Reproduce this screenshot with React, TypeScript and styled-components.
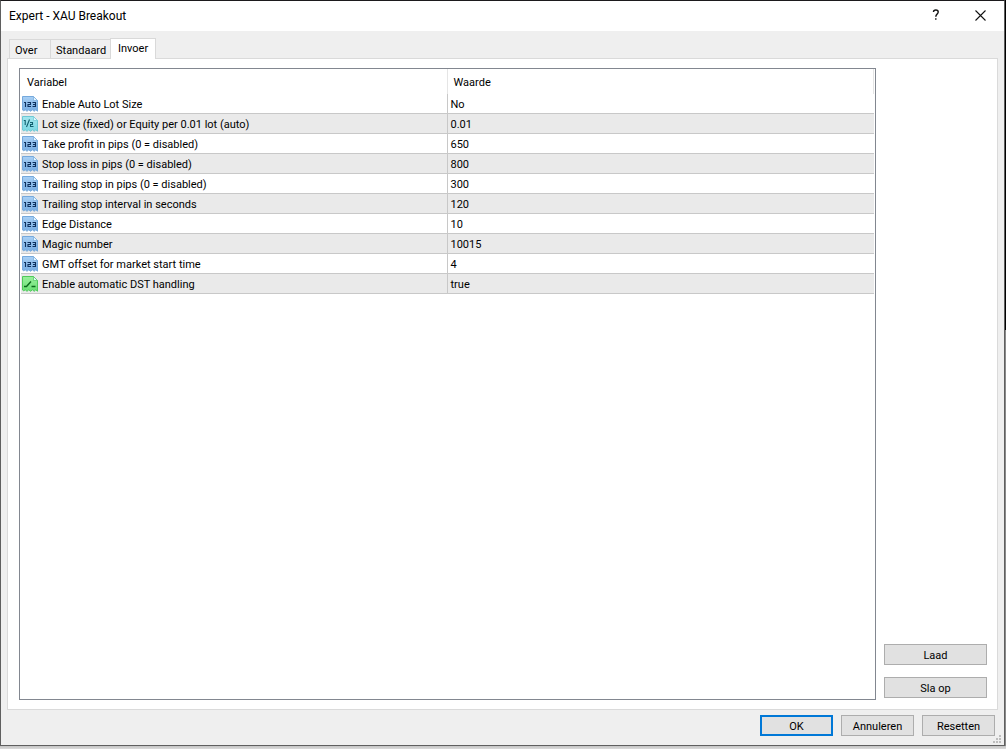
import React from 'react';
import styled, { createGlobalStyle } from 'styled-components';

const Global = createGlobalStyle`
  *, *::before, *::after { box-sizing: border-box; }
  body { margin: 0; background: linear-gradient(#000 0 330px, #8a8a8a 330px); }
  body, button { font-family: Roboto, "Liberation Sans", sans-serif; font-size: 11px; line-height: 16px; color: #000; }
`;

const Desktop = styled.div`
  min-height: 100vh;
  display: flex;
  flex-direction: column;
  padding: 0 1px 3px 0;
  background: linear-gradient(#c4c4c4, #dadada) bottom / 100% 3px no-repeat;
`;

const Dialog = styled.main`
  flex: 1;
  display: flex;
  flex-direction: column;
  background: #efefef;
  border: 1px solid #5f5f5f;
  border-top-color: #1c1a1d;
`;

const TitleBar = styled.header`
  display: flex;
  align-items: center;
  height: 30px;
  padding: 0 1px 0 8px;
  background: #fff;
`;

const Title = styled.h1`
  flex: 1;
  margin: 0;
  font-size: 12px;
  font-weight: 400;
`;

const CaptionButton = styled.button`
  display: flex;
  align-items: center;
  justify-content: center;
  width: 45px;
  height: 28px;
  padding: 0 0 2px;
  border: 0;
  background: transparent;
`;

const Body = styled.div`
  flex: 1;
  display: flex;
  flex-direction: column;
  padding: 7px 6px 0;
`;

const Tabs = styled.div`
  display: flex;
  align-items: flex-end;
  padding-left: 2px;
  margin-bottom: -1px;
  z-index: 1;
`;

const Tab = styled.button<{ $active?: boolean; $width: number }>`
  width: ${p => p.$width}px;
  height: ${p => (p.$active ? 21 : 19)}px;
  margin-bottom: ${p => (p.$active ? 0 : 1)}px;
  padding: ${p => (p.$active ? '0 0 1px 7px' : '3px 0 0 5px')};
  text-align: left;
  border: 1px solid #d9d9d9;
  border-bottom: 0;
  border-right-width: ${p => (p.$active ? 1 : 0)}px;
  background: ${p => (p.$active ? '#fff' : '#f0f0f0')};
`;

const Panel = styled.section`
  flex: 1;
  display: grid;
  grid-template-columns: 1fr 103px;
  gap: 8px;
  padding: 9px 10px 9px 11px;
  background: #fff;
  border: 1px solid #dadada;
`;

const ListFrame = styled.div`
  border: 1px solid #828790;
  padding: 0 1px;
`;

const Table = styled.table`
  width: 100%;
  table-layout: fixed;
  border-collapse: separate;
  border-spacing: 0;
`;

const HeadCell = styled.th`
  height: 25px;
  padding: 2px 6px 0;
  font-weight: 400;
  text-align: left;
  border-right: 1px solid #e5e5e5;

  &:first-child { width: calc(50% - 1px); }
`;

const Row = styled.tr`
  &:nth-child(even) { background: #eaeaea; }
`;

const Cell = styled.td<{ $value?: boolean }>`
  height: 20px;
  padding: ${p => (p.$value ? '2px 3px 0' : '0 3px 0 1px')};
  border-bottom: 1px solid #c8c8c8;
  border-right: ${p => (p.$value ? '0' : '1px solid #c8c8c8')};
  white-space: nowrap;
`;

const Variable = styled.div`
  display: flex;
  align-items: center;
  gap: 4px;
  height: 19px;
`;

const VariableName = styled.span`
  padding-top: 2px;
`;

const SideActions = styled.div`
  display: flex;
  flex-direction: column;
  justify-content: flex-end;
  gap: 12px;
  padding-bottom: 2px;
`;

const PushButton = styled.button<{ $primary?: boolean }>`
  height: 21px;
  min-width: 73px;
  padding: 2px 0 0;
  background: #e1e1e1;
  border: ${p => (p.$primary ? '2px solid #0078d7' : '1px solid #adadad')};
`;

const Footer = styled.footer`
  display: flex;
  align-items: flex-start;
  justify-content: flex-end;
  gap: 8px;
  height: 35px;
  padding: 5px 9px 0;
`;

const Grip = styled.svg`
  position: absolute;
  right: 3px;
  bottom: 2px;
`;

const Frame = styled.div`
  position: relative;
`;

type Kind = 'int' | 'real' | 'bool';

const palette: Record<Kind, { from: string; to: string; edge: string; ink: string }> = {
  int: { from: '#a9d0f5', to: '#74abe2', edge: '#75a9dc', ink: '#0c2f5c' },
  real: { from: '#a5e6ee', to: '#7ad8e3', edge: '#6cc8d5', ink: '#11606e' },
  bool: { from: '#9af09d', to: '#68e072', edge: '#4fc95b', ink: '#0b6a1c' },
};

function TypeIcon({ kind }: { kind: Kind }) {
  const c = palette[kind];
  return (
    <svg width="16" height="16" viewBox="0 0 16 16" aria-hidden="true">
      <defs>
        <linearGradient id={`fill-${kind}`} x1="0" y1="0" x2="0" y2="1">
          <stop offset="0" stopColor={c.from} />
          <stop offset="1" stopColor={c.to} />
        </linearGradient>
      </defs>
      <path
        d="M.5 .5H11.5L15.5 4.5V15.2L13.8 13.8L12.2 15.3L10.4 13.8L8.6 15.3L6.8 13.8L5 15.3L3.2 13.8L1.8 14.8L.5 14Z"
        fill={`url(#fill-${kind})`}
        stroke={c.edge}
      />
      <path d="M11.5 .5V4.5H15.5Z" fill="#e4f5fd" stroke={c.edge} strokeWidth=".7" />
      <g fill="none" stroke={c.ink} strokeWidth="1.1">
        {kind === 'int' && <path d="M2 6.5H3.5V11M5.5 6.5H8.5V8.5H6V10.5H9M10.5 6.5H13.5V10.5H10.5M11 8.5H13.5" />}
        {kind === 'real' && <path d="M1.8 4.5H3.2V9M7.5 3.5L4.5 11M8 6.5H10.5V8.5H8.5V10.5H11.5" />}
        {kind === 'bool' && <path d="M2 10.5H4.5L9 5.5M9.5 10.5H13.5" strokeWidth="1.4" />}
      </g>
    </svg>
  );
}

const inputs: { kind: Kind; name: string; value: string }[] = [
  { kind: 'int', name: 'Enable Auto Lot Size', value: 'No' },
  { kind: 'real', name: 'Lot size (fixed) or Equity per 0.01 lot (auto)', value: '0.01' },
  { kind: 'int', name: 'Take profit in pips (0 = disabled)', value: '650' },
  { kind: 'int', name: 'Stop loss in pips (0 = disabled)', value: '800' },
  { kind: 'int', name: 'Trailing stop in pips (0 = disabled)', value: '300' },
  { kind: 'int', name: 'Trailing stop interval in seconds', value: '120' },
  { kind: 'int', name: 'Edge Distance', value: '10' },
  { kind: 'int', name: 'Magic number', value: '10015' },
  { kind: 'int', name: 'GMT offset for market start time', value: '4' },
  { kind: 'bool', name: 'Enable automatic DST handling', value: 'true' },
];

const gripDots = [[6, 0], [3, 3], [6, 3], [0, 6], [3, 6], [6, 6]];

export default function App() {
  return (
    <Desktop>
      <Global />
      <Dialog>
        <TitleBar>
          <Title>Expert - XAU Breakout</Title>
          <CaptionButton aria-label="Help">
            <svg width="8" height="12" viewBox="0 0 8 12" fill="none" stroke="#111" strokeWidth="1.4">
              <path d="M1.5 3C1.5 .4 6.2 .4 6.2 3C6.2 5 3.8 5 3.8 7.8M3.8 9.3V10.8" />
            </svg>
          </CaptionButton>
          <CaptionButton aria-label="Close">
            <svg width="11" height="11" viewBox="0 0 11 11" fill="none" stroke="#111" strokeWidth="1.1">
              <path d="M.5 .5L10.5 10.5M10.5 .5L.5 10.5" />
            </svg>
          </CaptionButton>
        </TitleBar>
        <Body>
          <Tabs role="tablist">
            <Tab role="tab" $width={41}>Over</Tab>
            <Tab role="tab" $width={60}>Standaard</Tab>
            <Tab role="tab" $width={46} aria-selected $active>Invoer</Tab>
          </Tabs>
          <Panel>
            <ListFrame>
              <Table>
                <thead>
                  <tr>
                    <HeadCell>Variabel</HeadCell>
                    <HeadCell>Waarde</HeadCell>
                  </tr>
                </thead>
                <tbody>
                  {inputs.map(row => (
                    <Row key={row.name}>
                      <Cell>
                        <Variable>
                          <TypeIcon kind={row.kind} />
                          <VariableName>{row.name}</VariableName>
                        </Variable>
                      </Cell>
                      <Cell $value>{row.value}</Cell>
                    </Row>
                  ))}
                </tbody>
              </Table>
            </ListFrame>
            <SideActions>
              <PushButton>Laad</PushButton>
              <PushButton>Sla op</PushButton>
            </SideActions>
          </Panel>
        </Body>
        <Frame>
          <Footer>
            <PushButton $primary>OK</PushButton>
            <PushButton>Annuleren</PushButton>
            <PushButton>Resetten</PushButton>
          </Footer>
          <Grip width="8" height="8" fill="#bdbdbd" aria-hidden="true">
            {gripDots.map(([x, y]) => (
              <rect key={`${x}-${y}`} x={x} y={y} width="2" height="2" />
            ))}
          </Grip>
        </Frame>
      </Dialog>
    </Desktop>
  );
}
